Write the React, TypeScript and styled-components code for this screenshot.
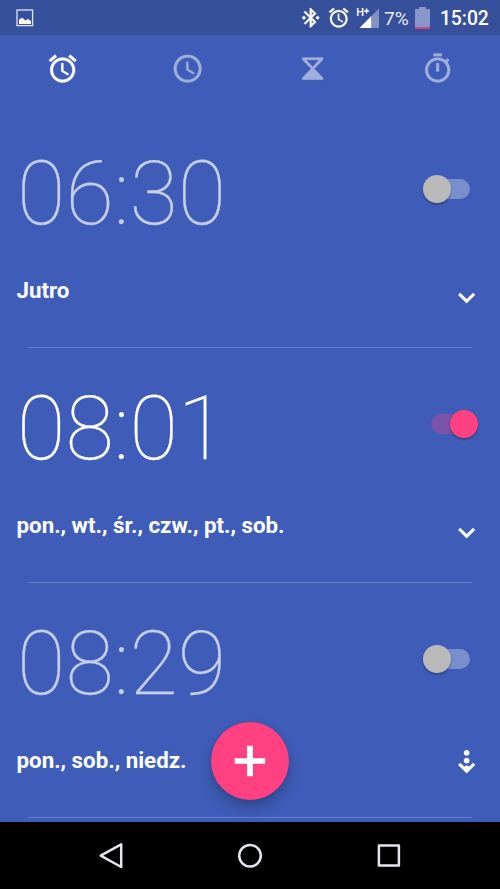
import React from "react";
import styled, { createGlobalStyle } from "styled-components";

const GlobalStyle = createGlobalStyle`
  *, *::before, *::after { box-sizing: border-box; }
  body { margin: 0; background: #000; font-family: Roboto, sans-serif; }
`;

const Screen = styled.div`
  position: relative;
  display: flex;
  flex-direction: column;
  width: 500px;
  height: 889px;
  overflow: hidden;
  background: #3f5db8;
  color: #fff;
`;

const StatusBar = styled.header`
  display: flex;
  justify-content: space-between;
  align-items: flex-start;
  flex: none;
  height: 35px;
  padding: 0 11.2px 0 16px;
  background: #36509b;
`;

const StatusGroup = styled.div`
  display: flex;
  height: 35px;
  align-items: center;
`;

const StatusIcon = styled.svg<{ $gap?: number }>`
  display: block;
  flex: none;
  margin-left: ${({ $gap = 0 }) => $gap}px;
  overflow: visible;
`;

const BatteryPercent = styled.span`
  margin: 2px 0 0 4.5px;
  width: 31px;
  font-size: 19.2px;
  line-height: 22px;
  color: rgba(255, 255, 255, 0.9);
`;

const StatusTime = styled.span`
  margin-top: 2px;
  margin-left: 10px;
  font-size: 19.3px;
  line-height: 22px;
  font-weight: 500;
`;

const Tabs = styled.nav`
  display: grid;
  grid-template-columns: repeat(4, 1fr);
  flex: none;
  height: 78px;
  padding-top: 17px;
  justify-items: center;
`;

const Tab = styled.button<{ $active?: boolean }>`
  width: 34px;
  height: 34px;
  padding: 0;
  border: 0;
  background: none;
  color: #fff;
  opacity: ${({ $active }) => ($active ? 1 : 0.5)};
`;

const TabIcon = styled.svg`
  display: block;
  width: 33.33px;
  height: 33.33px;
  margin: 0 auto;
  stroke: currentColor;
  stroke-width: 0.2;
`;

const AlarmList = styled.main`
  flex: 1;
  min-height: 0;
  overflow: hidden;
`;

const AlarmRow = styled.section`
  display: flex;
  flex-direction: column;
  height: 235px;
`;

const AlarmTop = styled.div`
  display: flex;
  justify-content: space-between;
  height: 160px;
  padding: 27px 22px 0 17px;
`;

const Time = styled.div<{ $on: boolean }>`
  margin-top: 1px;
  font-size: 88.4px;
  line-height: 106px;
  font-weight: 100;
  color: #fff;
  opacity: ${({ $on }) => ($on ? 1 : 0.7)};
  -webkit-text-stroke: 0.25px #fff;
`;

const Switch = styled.button<{ $on: boolean }>`
  display: flex;
  align-items: center;
  justify-content: ${({ $on }) => ($on ? "flex-end" : "flex-start")};
  width: 47px;
  height: 20px;
  margin-top: 38.5px;
  margin-right: ${({ $on }) => ($on ? 0 : 8)}px;
  padding: 0;
  border: 0;
  border-radius: 10px;
  background: ${({ $on }) => ($on ? "rgba(255, 64, 129, 0.3)" : "rgba(255, 255, 255, 0.3)")};
`;

const Thumb = styled.span<{ $on: boolean }>`
  flex: none;
  width: 28px;
  height: 28px;
  border-radius: 50%;
  background: ${({ $on }) => ($on ? "#ff4081" : "#b9b9b9")};
  box-shadow: 0 1.5px 2.5px rgba(0, 0, 0, 0.32);
`;

const AlarmBottom = styled.div`
  display: flex;
  justify-content: space-between;
  height: 74px;
  padding: 4px 17px 0 16.5px;
`;

const Days = styled.div`
  font-size: 22.3px;
  line-height: 27px;
  font-weight: 700;
`;

const Expand = styled.svg`
  display: block;
  width: 33.33px;
  height: 33.33px;
  margin-top: 4.7px;
  overflow: visible;
  stroke: #fff;
  stroke-width: 0.3;
`;

const Divider = styled.hr`
  width: 444px;
  height: 1.4px;
  margin: 0 auto;
  border: 0;
  background: rgba(255, 255, 255, 0.2);
`;

const AddButton = styled.button`
  position: absolute;
  left: 211px;
  top: 722.4px;
  display: grid;
  place-items: center;
  width: 78px;
  height: 78px;
  padding: 0;
  border: 0;
  border-radius: 50%;
  background: #ff4081;
  box-shadow: 0 8px 14px rgba(0, 0, 0, 0.2), 0 1px 5px rgba(0, 0, 0, 0.13);
`;

const NavBar = styled.footer`
  display: grid;
  grid-template-columns: repeat(3, 139px);
  justify-content: center;
  justify-items: center;
  flex: none;
  height: 67px;
  padding-top: 17px;
  background: #000;
`;

const NavIcon = styled.svg`
  display: block;
  width: 34px;
  height: 34px;
  fill: none;
  stroke: #e4e3ee;
  stroke-width: 2.5;
  stroke-linejoin: round;
`;

const ALARM_PATH =
  "M22 5.72l-4.6-3.86-1.29 1.53 4.6 3.86L22 5.72zM7.88 3.39L6.6 1.86 2 5.71l1.29 1.53 4.59-3.85zM12.5 8H11v6l4.75 2.85.75-1.23-4-2.37V8zM12 4c-4.97 0-9 4.03-9 9s4.02 9 9 9c4.97 0 9-4.03 9-9s-4.03-9-9-9zm0 16c-3.87 0-7-3.13-7-7s3.13-7 7-7 7 3.13 7 7-3.13 7-7 7z";
const CLOCK_PATH =
  "M11.99 2C6.47 2 2 6.48 2 12s4.47 10 9.99 10C17.52 22 22 17.52 22 12S17.52 2 11.99 2zM12 20c-4.42 0-8-3.58-8-8s3.58-8 8-8 8 3.58 8 8-3.58 8-8 8zm.5-13H11v6l5.25 3.15.75-1.23-4.5-2.67z";
const TIMER_PATH =
  "M15 1H9v2h6V1zm-4 13h2V8h-2v6zm8.03-6.61l1.42-1.42c-.43-.51-.9-.99-1.41-1.41l-1.42 1.42C16.07 4.74 14.12 4 12 4c-4.97 0-9 4.03-9 9s4.02 9 9 9 9-4.03 9-9c0-2.12-.74-4.07-1.97-5.61zM12 20c-3.87 0-7-3.13-7-7s3.13-7 7-7 7 3.13 7 7-3.13 7-7 7z";
const HOURGLASS_PATH =
  "M4.5 4h15v1.5L13.2 12l6.3 6.5V20h-15v-1.5l6.3-6.5-6.3-6.5zM7.4 5.7L12 10.6l4.6-4.9z";
const BLUETOOTH_PATH =
  "M7 12l-2-2-2 2 2 2 2-2zm10.71-4.29L12 2h-1v7.59L6.41 5 5 6.41 10.59 12 5 17.59 6.41 19 11 14.41V22h1l5.71-5.71-4.3-4.29 4.3-4.29zM13 5.83l1.88 1.88L13 9.59V5.83zm1.88 10.46L13 18.17v-3.76l1.88 1.88zM19 10l-2 2 2 2 2-2-2-2z";

const tabs = [
  { name: "alarm", path: ALARM_PATH },
  { name: "clock", path: CLOCK_PATH },
  { name: "timer", path: HOURGLASS_PATH },
  { name: "stopwatch", path: TIMER_PATH },
];

const alarms = [
  { time: "06:30", days: "Jutro", on: false, bouncing: false },
  { time: "08:01", days: "pon., wt., śr., czw., pt., sob.", on: true, bouncing: false },
  { time: "08:29", days: "pon., sob., niedz.", on: false, bouncing: true },
];

function StatusIcons() {
  return (
    <StatusGroup>
      <StatusIcon width="23.5" height="23.5" viewBox="0 0 24 24" fill="#fff" stroke="#fff" strokeWidth=".3">
        <path d={BLUETOOTH_PATH} />
      </StatusIcon>
      <StatusIcon $gap={4} width="23.5" height="23.5" viewBox="0 0 24 24" fill="#fff" stroke="#fff" strokeWidth=".2">
        <path d={ALARM_PATH} />
      </StatusIcon>
      <StatusIcon $gap={7} width="22" height="22" viewBox="0 0 22 22">
        <path d="M22 1.5V21H2.5z" fill="#fff" opacity=".38" />
        <path d="M14.2 9.3V21H2.5z" fill="#fff" />
        <text x="-0.7" y="9.2" fontSize="11" fontWeight="500" fill="#fff" fontFamily="Roboto, sans-serif">
          H
        </text>
        <path d="M7.2 4H12M9.6 1.6v4.8" stroke="#fff" strokeWidth="1.4" />
      </StatusIcon>
      <BatteryPercent>7%</BatteryPercent>
      <StatusIcon width="15" height="22" viewBox="0 0 15 22">
        <path d="M4 0h7v2H15v18H0V2h4z" fill="#8797c9" />
        <path d="M0 20h15v1.2q0 .8-.8.8H.8Q0 22 0 21.2z" fill="#d24580" />
      </StatusIcon>
      <StatusTime>15:02</StatusTime>
    </StatusGroup>
  );
}

function Alarm({ time, days, on, bouncing }: (typeof alarms)[number]) {
  return (
    <AlarmRow>
      <AlarmTop>
        <Time $on={on}>{time}</Time>
        <Switch $on={on} role="switch" aria-checked={on}>
          <Thumb $on={on} />
        </Switch>
      </AlarmTop>
      <AlarmBottom>
        <Days>{days}</Days>
        <Expand viewBox="0 0 24 24" fill="#fff">
          <path d="M7.41 8.59 12 13.17l4.59-4.58L18 10l-6 6-6-6z" />
          {bouncing && (
            <>
              <circle cx="12" cy="1.3" r="1.9" />
              <circle cx="12" cy="7" r="1.9" />
              <circle cx="12" cy="12.5" r="1.9" />
            </>
          )}
        </Expand>
      </AlarmBottom>
      <Divider />
    </AlarmRow>
  );
}

export default function App() {
  return (
    <>
      <GlobalStyle />
      <Screen>
        <StatusBar>
          <StatusGroup>
            <StatusIcon width="18" height="18" viewBox="0 0 18 18">
              <rect x="1" y="1" width="15.6" height="15.6" fill="none" stroke="#dfe4f3" strokeWidth="1.3" />
              <path d="M3 15v-4l2-2 2.2.3L9 11.4l3-1.3 3 2V15z" fill="#fff" />
            </StatusIcon>
          </StatusGroup>
          <StatusIcons />
        </StatusBar>
        <Tabs>
          {tabs.map(({ name, path }) => (
            <Tab key={name} aria-label={name} $active={name === "alarm"}>
              <TabIcon viewBox="0 0 24 24" fill="currentColor">
                <path fillRule="evenodd" d={path} />
              </TabIcon>
            </Tab>
          ))}
        </Tabs>
        <AlarmList>
          {alarms.map((alarm) => (
            <Alarm key={alarm.time} {...alarm} />
          ))}
        </AlarmList>
        <NavBar>
          <NavIcon viewBox="0 0 34 34">
            <path d="M27.2 5.4V28L6.7 16.7z" />
          </NavIcon>
          <NavIcon viewBox="0 0 34 34">
            <circle cx="17" cy="16.7" r="10.8" />
          </NavIcon>
          <NavIcon viewBox="0 0 34 34">
            <rect x="6.9" y="6.5" width="20" height="20" />
          </NavIcon>
        </NavBar>
        <AddButton aria-label="add">
          <svg width="32" height="32" viewBox="0 0 32 32">
            <path d="M13.1.8h5.8v12.5h12.3v5.4H18.9v12.5h-5.8V18.7H.7v-5.4h12.4z" fill="#fff" />
          </svg>
        </AddButton>
      </Screen>
    </>
  );
}
